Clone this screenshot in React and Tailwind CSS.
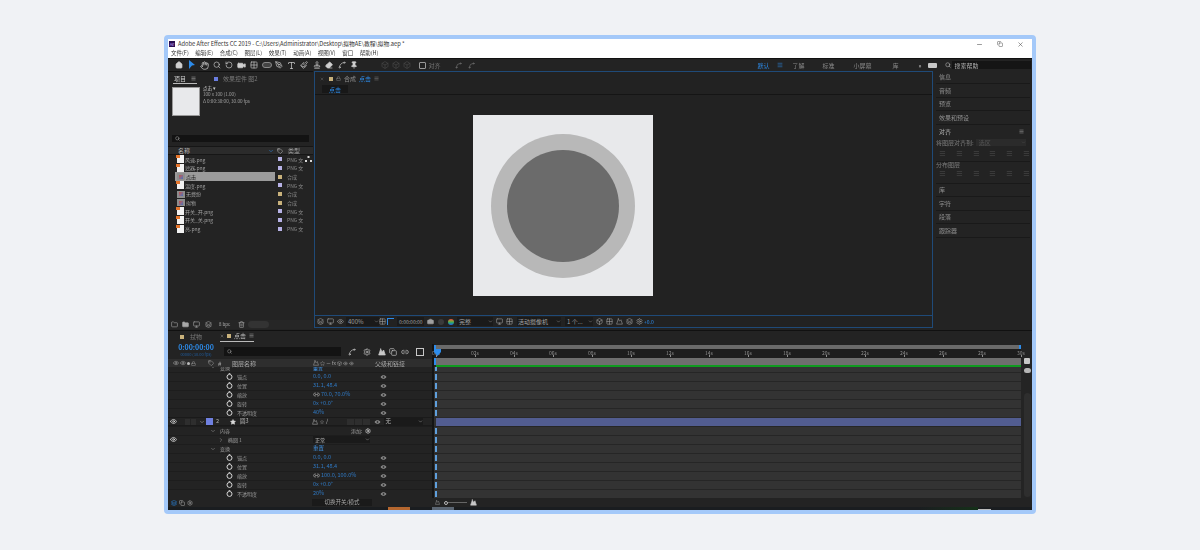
import React from 'react';
import {
  Home, Hand, Search, RotateCcw, Video, PenTool, Type, Paintbrush, Stamp, Eraser, Pin, Eye, Star, Camera,
  ChevronDown, ChevronRight, Settings, Minus, X, Copy, Link2, Lock, Tag, Monitor, Layers, Folder, Trash2, Box, Grid2x2,
  Mountain, Spline, Menu,
} from 'lucide-react';

const Stopwatch = () => (
  <svg width="7" height="7" viewBox="0 0 10 10" className="shrink-0">
    <circle cx="5" cy="5.6" r="3.6" fill="none" stroke="#d8d8d8" strokeWidth="1.4" />
    <path d="M3.8 .7h2.4" stroke="#d8d8d8" strokeWidth="1.2" />
  </svg>
);

const Spiral = () => (
  <svg width="7" height="6" viewBox="0 0 12 10" className="shrink-0">
    <path d="M1 5c2-4 8-4 10 0-2 4-8 4-10 0z" fill="#8a8a8a" />
    <circle cx="6" cy="5" r="1.6" fill="#333" />
  </svg>
);

const Arrow = () => (
  <svg width="8" height="10" viewBox="0 0 8 10"><path d="M1 0l6 5-3 .4-3 3.6z" fill="#2d8ceb" /></svg>
);

const Network = () => (
  <svg width="7" height="6" viewBox="0 0 7 6" className="ml-[2px]">
    <path d="M2.5 0h2v2h-2zM0 4h2v2H0zM5 4h2v2H5z" fill="#d8d8d8" />
  </svg>
);

const FileIcon = ({ comp }) =>
  comp ? (
    <span className="flex h-[7px] w-[8px] shrink-0 items-center justify-center bg-[#8d8d8d]">
      <span className="h-[4px] w-[4px] bg-gradient-to-br from-[#c84a3c] to-[#3d6fc0]" />
    </span>
  ) : (
    <span className="relative h-[8px] w-[7px] shrink-0 bg-[#f2f2f2]">
      <span className="absolute -left-[1px] top-0 h-[3px] w-[4px] bg-[#e5762d]" />
    </span>
  );

const projectRows = [
  { name: '风速.png', type: 'PNG 文', net: true },
  { name: '滤器.png', type: 'PNG 文' },
  { name: '点击', type: '合成', comp: true, selected: true },
  { name: '温度.png', type: 'PNG 文' },
  { name: '无费纷', type: '合成', comp: true },
  { name: '拟物', type: '合成', comp: true },
  { name: '开关_开.png', type: 'PNG 文' },
  { name: '开关_关.png', type: 'PNG 文' },
  { name: '亮.png', type: 'PNG 文' },
];

const rightTop = ['信息', '音频', '预览', '效果和预设'];
const rightBottom = ['库', '字符', '段落', '跟踪器'];
const ruler = ['00s', '02s', '04s', '06s', '08s', '10s', '12s', '14s', '16s', '18s', '20s', '22s', '24s', '26s', '28s', '30s'];

const PropRow = ({ label, value, link }) => (
  <div className="flex h-[9px] items-center border-t border-[#1d1d1d] pb-[1px]">
    <div className="flex w-[145px] items-center gap-[4px] pl-[58px] text-[5px] text-[#9a9a9a]">
      <Stopwatch />
      <span>{label}</span>
    </div>
    <div className="flex w-[67px] items-center gap-[1px] text-[5.5px] text-[#2f79c4]">
      {link && <Link2 size={7} className="text-[#bbbbbb]" />}
      <span>{value}</span>
    </div>
    <Spiral />
  </div>
);

const TextRow = ({ indent, label, right, eye, open = true }) => (
  <div className="flex h-[9px] items-center border-t border-[#1d1d1d] pb-[1px] text-[5px] text-[#9a9a9a]">
    <div className={`flex w-[145px] items-center gap-[3px] ${indent}`}>
      {eye && <Eye size={7} className="mr-[38px] text-white" />}
      {open ? <ChevronDown size={6} /> : <ChevronRight size={6} />}
      <span className="ml-[1px]">{label}</span>
    </div>
    {right}
  </div>
);

const Track = ({ bar }) =>
  bar ? (
    <div className="flex h-[9px] items-center border-t border-[#2a2a2a] bg-[#2f2f2f] pl-[2px]">
      <div className="h-[8px] w-full bg-[#525d91]" />
    </div>
  ) : (
    <div className="flex h-[9px] items-center border-t border-[#262626] bg-[#333333] pl-[1px]">
      <div className="h-[6px] w-[2px] bg-[#5f9fdc]" />
    </div>
  );

export default function App() {
  return (
    <div className="h-[550px] w-[1200px] overflow-hidden bg-[#f0f2f5] pt-[35px] font-['Noto_Sans_CJK_SC','Liberation_Sans',sans-serif]">
      <div className="ml-[164px] h-[479px] w-[872px] overflow-hidden rounded-[4px] border-4 border-[#a4c9f9] bg-[#232323]">
        <div className="blur-[0.35px]">

          {/* title bar + menu */}
          <div className="h-[19px] bg-white text-[#333333]">
            <div className="flex h-[10px] items-center pl-[1px]">
              <span className="mr-[3px] flex h-[6px] w-[6px] items-center justify-center bg-[#2a0f52] text-[4px] leading-none text-[#c9a6ff]">Ae</span>
              <span className="text-[5.75px] leading-none">Adobe After Effects CC 2019 - C:\Users\Administrator\Desktop\拟物AE\教程\拟物.aep *</span>
              <div className="ml-auto mr-[8px] flex items-center gap-[14px] text-[#555555]">
                <Minus size={7} />
                <Copy size={6} />
                <X size={7} />
              </div>
            </div>
            <div className="flex h-[9px] items-center gap-[6.5px] pl-[3px] text-[5.5px] leading-none">
              <span>文件(F)</span>
              <span>编辑(E)</span>
              <span>合成(C)</span>
              <span>图层(L)</span>
              <span>效果(T)</span>
              <span>动画(A)</span>
              <span>视图(V)</span>
              <span>窗口</span>
              <span>帮助(H)</span>
            </div>
          </div>

          {/* tool bar */}
          <div className="flex h-[13px] items-center border-t border-[#111111] text-[#c8c8c8]">
            <div className="ml-[5px] flex items-center">
              <span className="flex w-[12.5px] justify-center"><Home size={8} fill="#d0d0d0" /></span>
              <span className="flex w-[12.5px] justify-center"><Arrow /></span>
              <span className="flex w-[12.5px] justify-center"><Hand size={9} /></span>
              <span className="flex w-[12.5px] justify-center"><Search size={8} /></span>
              <span className="flex w-[12.5px] justify-center"><RotateCcw size={8} /></span>
              <span className="flex w-[12.5px] justify-center"><Video size={9} fill="#d0d0d0" /></span>
              <span className="flex w-[12.5px] justify-center"><Grid2x2 size={8} /></span>
              <span className="flex w-[12.5px] justify-center"><span className="h-[6px] w-[10px] rounded-full border border-[#8a8a8a] bg-[#444444]" /></span>
              <span className="flex w-[12.5px] justify-center"><PenTool size={8} /></span>
              <span className="flex w-[12.5px] justify-center"><Type size={9} /></span>
              <span className="flex w-[12.5px] justify-center"><Paintbrush size={8} /></span>
              <span className="flex w-[12.5px] justify-center"><Stamp size={8} /></span>
              <span className="flex w-[12.5px] justify-center"><Eraser size={8} fill="#d0d0d0" /></span>
              <span className="flex w-[12.5px] justify-center"><Spline size={8} /></span>
              <span className="flex w-[12.5px] justify-center"><Pin size={8} fill="#d0d0d0" /></span>
            </div>
            <div className="ml-[20px] flex items-center gap-[3px] text-[#4a4a4a]">
              <Box size={8} />
              <Box size={8} />
              <Box size={8} />
            </div>
            <div className="ml-[8px] flex items-center gap-[3px] text-[6px] text-[#777777]">
              <span className="h-[7px] w-[7px] rounded-[1px] border border-[#999999]" />
              <span>对齐</span>
            </div>
            <div className="ml-[14px] flex items-center gap-[6px] text-[#777777]">
              <Spline size={7} />
              <Spline size={7} />
            </div>
            <div className="ml-[283px] flex items-center text-[6px] text-[#8a8a8a]">
              <span className="text-[#2d8ceb]">默认</span>
              <Menu size={6} className="ml-[7px] text-[#2d8ceb]" />
              <span className="ml-[10px]">了解</span>
              <span className="ml-[18px]">标准</span>
              <span className="ml-[19px]">小屏幕</span>
              <span className="ml-[21px]">库</span>
              <span className="ml-[20px] text-[#cccccc]">»</span>
              <span className="ml-[7px] h-[5px] w-[9px] rounded-[1px] bg-[#c8c8c8]" />
              <Search size={6} className="ml-[8px] text-[#c8c8c8]" />
              <span className="ml-[1px] flex h-[8px] w-[79px] items-center bg-[#151515] pl-[2px] text-[#b0b0b0]">搜索帮助</span>
            </div>
          </div>

          {/* upper panels */}
          <div className="flex h-[259px]">

            {/* project panel */}
            <div className="flex h-[258px] w-[145px] flex-col border-t border-[#111111] text-[6px] text-[#a0a0a0]">
              <div className="flex h-[13px] items-center pl-[5px]">
                <span className="flex items-center gap-[5px] border-b border-[#bbbbbb] px-[1px] text-[#cfcfcf]">
                  项目
                  <Menu size={5} />
                </span>
                <span className="ml-[17px] h-[4px] w-[4px] bg-[#6a7de0]" />
                <span className="ml-[5px] text-[#777777]">效果控件 图2</span>
              </div>
              <div className="flex h-[50px] pl-[4px] pt-[2px]">
                <div className="h-[29px] w-[28px] border border-[#999999] bg-[#e8e9eb]" />
                <div className="-mt-[2.5px] ml-[3px] flex flex-col text-[4.6px] leading-[6.5px]">
                  <span className="text-[#d0d0d0]">点击 ▾</span>
                  <span>100 x 100 (1.00)</span>
                  <span>Δ 0:00:30:00, 30.00 fps</span>
                </div>
              </div>
              <div className="ml-[4px] flex h-[7px] w-[137px] items-center bg-[#131313] pl-[3px]">
                <Search size={5} className="text-[#bbbbbb]" />
              </div>
              <div className="mt-[4px] flex h-[9px] items-center border-y border-[#161616] bg-[#2b2b2b] pl-[10px]">
                <span className="w-[12px] whitespace-nowrap text-[#b5b5b5]">名称</span>
                <ChevronDown size={6} className="ml-[78px] text-[#2d8ceb]" />
                <Tag size={6} className="ml-[3px] text-[#c8c8c8]" />
                <span className="ml-[5px]">类型</span>
              </div>
              <div className="flex flex-col text-[5px]">
                {projectRows.map((row) => (
                  <div key={row.name} className="flex h-[8.7px] items-center">
                    <div className={`ml-[7px] flex h-[8.7px] w-[100px] items-center gap-[1px] pl-[2px] ${row.selected ? 'bg-[#9b9b9b] text-[#111111]' : ''}`}>
                      <FileIcon comp={row.comp} />
                      <span>{row.name}</span>
                    </div>
                    <span className={`ml-[3px] h-[4px] w-[4px] ${row.comp ? 'bg-[#c9b27c]' : 'bg-[#b7b2e6]'}`} />
                    <span className="ml-[5px] text-[#8a8a8a]">{row.type}</span>
                    {row.net && <Network />}
                  </div>
                ))}
              </div>
              <div className="mt-auto flex h-[9px] items-center bg-[#262626] pl-[3px] text-[#a8a8a8]">
                <Folder size={7} />
                <Folder size={7} fill="#a8a8a8" className="ml-[4px]" />
                <Monitor size={7} className="ml-[4px]" />
                <Layers size={7} className="ml-[5px]" />
                <span className="ml-[7px] w-[12px] whitespace-nowrap text-[4.5px]">8 bpc</span>
                <Trash2 size={7} className="ml-[7px]" />
                <span className="ml-[3px] h-[7px] w-[21px] rounded-full bg-[#333333]" />
              </div>
            </div>

            {/* composition panel */}
            <div className="ml-[1px] flex h-[257px] w-[619px] flex-col border border-[#1f4a78] bg-[#222222] text-[6px] text-[#8f8f8f]">
              <div className="flex h-[13px] items-center gap-[3px] pl-[5px]">
                <X size={4} />
                <span className="ml-[2px] h-[4px] w-[4px] bg-[#c9b27c]" />
                <Lock size={5} />
                <span>合成</span>
                <span className="text-[#2d8ceb]">点击</span>
                <Menu size={5} />
              </div>
              <div className="h-[10px] border-b border-[#151515] pl-[7px]">
                <span className="flex h-[8px] w-[26px] items-center justify-center bg-[#181818] text-[#2d8ceb]">点击</span>
              </div>
              <div className="flex-1 pl-[158px] pt-[20px]">
                <div className="flex h-[181px] w-[180px] items-center justify-center bg-[#e8e9eb]">
                  <div className="flex h-[144px] w-[144px] items-center justify-center rounded-full bg-[#b8b8b8]">
                    <div className="h-[112px] w-[112px] rounded-full bg-[#6b6b6b]" />
                  </div>
                </div>
              </div>
              <div className="flex h-[12px] items-center border-t border-[#1f4a78] pl-[2px] text-[#a0a0a0]">
                <Layers size={7} />
                <Monitor size={7} className="ml-[3px]" />
                <Eye size={7} className="ml-[3px]" />
                <span className="ml-[2px] flex h-[9px] w-[33px] items-center bg-[#1a1a1a] pl-[2px]">400%<ChevronDown size={5} className="ml-auto" /></span>
                <Grid2x2 size={7} />
                <span className="ml-[1px] h-[7px] w-[7px] border-l border-t border-[#2d8ceb]" />
                <span className="ml-[3px] flex h-[9px] w-[27px] items-center bg-[#1a1a1a] pl-[2px] text-[5px]">0:00:00:00</span>
                <Camera size={7} className="ml-[3px]" fill="#a0a0a0" />
                <span className="ml-[4px] h-[6px] w-[6px] rounded-full bg-[#3a3a3a]" />
                <span className="ml-[4px] h-[6px] w-[6px] rounded-full bg-gradient-to-b from-[#e04040] via-[#40b040] to-[#3060e0]" />
                <span className="ml-[3px] flex h-[9px] w-[36px] items-center bg-[#1a1a1a] pl-[2px]">完整<ChevronDown size={5} className="ml-auto" /></span>
                <Monitor size={7} className="ml-[3px]" />
                <Grid2x2 size={7} className="ml-[3px]" />
                <span className="ml-[4px] flex h-[9px] w-[44px] items-center bg-[#1a1a1a] pl-[1px]">活动摄像机<ChevronDown size={5} className="ml-auto" /></span>
                <span className="ml-[4px] flex h-[9px] w-[28px] items-center bg-[#1a1a1a] pl-[2px]">1 个...<ChevronDown size={5} className="ml-auto" /></span>
                <Box size={7} className="ml-[3px]" />
                <Grid2x2 size={7} className="ml-[3px]" />
                <Mountain size={7} className="ml-[3px]" />
                <Layers size={7} className="ml-[3px]" />
                <Settings size={7} className="ml-[3px]" />
                <span className="ml-[1px] text-[5px] text-[#2d8ceb]">+0.0</span>
              </div>
            </div>

            {/* right side panels */}
            <div className="ml-[3px] w-[94px] text-[6px] text-[#8f8f8f]">
              <div className="-mt-[0.5px]" />
              {rightTop.map((name) => (
                <div key={name} className="flex h-[13.5px] items-center border-b border-[#191919] pl-[3px]">{name}</div>
              ))}
              <div className="flex h-[13px] items-center justify-between pl-[3px] pr-[6px] text-[#b5b5b5]">
                <span>对齐</span>
                <Menu size={5} />
              </div>
              <div className="flex h-[9px] items-center">
                <span className="text-[#7d7d7d]">将图层对齐到:</span>
                <span className="ml-[2px] flex h-[7px] w-[50px] items-center bg-[#2b2b2b] pl-[3px] text-[#555555]">选区<ChevronDown size={5} className="ml-auto" /></span>
              </div>
              <div className="flex h-[15px] items-center gap-[10px] border-b border-[#191919] pl-[3px] text-[#4d4d4d]">
                <Menu size={7} /><Menu size={7} /><Menu size={7} /><Menu size={7} /><Menu size={7} /><Menu size={7} />
              </div>
              <div className="flex h-[5px] items-center text-[#7d7d7d]">分布图层</div>
              <div className="flex h-[13px] items-center gap-[10px] pl-[3px] text-[#4d4d4d]">
                <Menu size={7} /><Menu size={7} /><Menu size={7} /><Menu size={7} /><Menu size={7} /><Menu size={7} />
              </div>
              <div className="h-[4px] border-b border-[#191919]" />
              {rightBottom.map((name) => (
                <div key={name} className="flex h-[13.5px] items-center border-b border-[#191919] pl-[3px]">{name}</div>
              ))}
            </div>
          </div>

          {/* timeline tabs */}
          <div className="flex h-[14px] items-center border-t border-[#111111] pb-[2px] pl-[12px] text-[6px] text-[#777777]">
            <span className="h-[4px] w-[4px] bg-[#c9b27c]" />
            <span className="ml-[6px]">拭物</span>
            <div className="ml-[18px] flex items-center gap-[3px] border-b border-[#bbbbbb] pb-[1px] text-[#bdbdbd]">
              <X size={4} />
              <span className="h-[4px] w-[4px] bg-[#c9b27c]" />
              <span>点击</span>
              <Menu size={5} />
            </div>
          </div>

          <div className="flex h-[154px]">
            {/* layer column */}
            <div className="w-[266px] border-r-2 border-[#141414]">
              <div className="flex h-[15px] items-center">
                <div className="-mt-[2px] ml-[5px] w-[46px] text-center text-[#2d8ceb]">
                  <div className="text-[7px] font-bold leading-[7px]">0:00:00:00</div>
                  <div className="whitespace-nowrap text-[4px] leading-[6px] text-[#1f5c9e]">00000 (30.00 fps)</div>
                </div>
                <div className="ml-[5px] flex h-[9px] w-[117px] items-center bg-[#131313] pl-[3px]">
                  <Search size={5} className="text-[#bbbbbb]" />
                </div>
                <div className="ml-[7px] flex items-center text-[#c8c8c8]">
                  <Spline size={8} />
                  <Settings size={8} className="ml-[7px]" />
                  <Mountain size={8} fill="#c8c8c8" className="ml-[7px]" />
                  <Copy size={8} className="ml-[3px]" />
                  <Link2 size={8} className="ml-[4px]" />
                  <span className="ml-[7px] h-[8px] w-[8px] border border-[#c8c8c8]" />
                </div>
              </div>
              <div className="flex h-[8px] items-center bg-[#2e2e2e] text-[6px] text-[#a8a8a8]">
                <div className="ml-[5px] flex w-[35px] items-center gap-[1px]">
                  <Eye size={6} /><Eye size={6} /><span className="h-[3px] w-[3px] rounded-full bg-[#bbb]" /><Lock size={5} />
                </div>
                <Tag size={6} />
                <span className="ml-[4px] w-[14px]">#</span>
                <span className="w-[81px]">图层名称</span>
                <div className="flex w-[62px] items-center gap-[1px]">
                  <Mountain size={6} /><Star size={5} /><Minus size={5} /><span className="text-[5px]">fx</span><Box size={5} /><Eye size={5} /><Eye size={5} />
                </div>
                <span>父级和链接</span>
              </div>
              <div className="h-[131px] overflow-hidden">
                <div className="flex h-[5px] overflow-hidden text-[5px] leading-[1px]">
                  <ChevronDown size={6} className="ml-[42px] -mt-[3px] text-[#9a9a9a]" />
                  <span className="ml-[4px] w-[93px] text-[#9a9a9a]">变换</span>
                  <span className="text-[#3f8fdf]">重置</span>
                </div>
                <PropRow label="锚点" value="0.0, 0.0" />
                <PropRow label="位置" value="31.1, 48.4" />
                <PropRow link label="缩放" value="70.0, 70.0%" />
                <PropRow label="旋转" value="0x +0.0°" />
                <PropRow label="不透明度" value="40%" />

                <div className="flex h-[9px] items-center border-y border-[#1a1a1a] text-[5.5px] text-[#b5b5b5]">
                  <Eye size={7} className="ml-[2px] text-white" />
                  <span className="ml-[8px] h-[6px] w-[5px] bg-[#2e2e2e]" />
                  <span className="ml-[1px] h-[6px] w-[5px] bg-[#2e2e2e]" />
                  <ChevronDown size={6} className="ml-[3px]" />
                  <span className="ml-[1px] h-[7px] w-[7px] bg-[#6f80e0]" />
                  <span className="ml-[3px] w-[14px]">2</span>
                  <Star size={6} fill="#d8d8d8" className="text-[#d8d8d8]" />
                  <span className="ml-[4px] w-[72px]">圆3</span>
                  <Mountain size={6} />
                  <Star size={4} className="ml-[2px]" />
                  <span className="ml-[2px] w-[2px]">/</span>
                  <span className="ml-[19px] h-[6px] w-[7px] bg-[#2e2e2e]" />
                  <span className="ml-[1px] h-[6px] w-[7px] bg-[#2e2e2e]" />
                  <span className="ml-[1px] h-[6px] w-[7px] bg-[#2e2e2e]" />
                  <span className="ml-[4px]"><Spiral /></span>
                  <span className="ml-[2.5px] flex h-[7px] w-[39px] items-center bg-[#1a1a1a] pl-[2px]">无<ChevronDown size={5} className="ml-auto" /></span>
                </div>

                <TextRow indent="pl-[42px]" label="内容" right={
                  <span className="ml-[38px] flex items-center gap-[3px] text-[#9a9a9a]">
                    添加:<Settings size={6} className="text-white" />
                  </span>
                } />
                <TextRow eye indent="pl-[2px]" label="椭圆 1" open={false} right={
                  <span className="flex h-[7px] w-[57px] items-center bg-[#1a1a1a] pl-[2px] text-[#b5b5b5]">正常<ChevronDown size={5} className="ml-auto" /></span>
                } />
                <TextRow indent="pl-[42px]" label="变换" right={<span className="text-[5.5px] text-[#3f8fdf]">重置</span>} />
                <PropRow label="锚点" value="0.0, 0.0" />
                <PropRow label="位置" value="31.1, 48.4" />
                <PropRow link label="缩放" value="100.0, 100.0%" />
                <PropRow label="旋转" value="0x +0.0°" />
                <PropRow label="不透明度" value="20%" />
              </div>
            </div>

            {/* track column */}
            <div className="relative w-[587px]">
              <div className="mt-[1px] flex h-[4px] items-center justify-between bg-[#6a6a6a]">
                <span className="h-[4px] w-[2px] bg-[#2d8ceb]" />
                <span className="h-[4px] w-[2px] bg-[#2d8ceb]" />
              </div>
              <div className="h-[9px] bg-[#1d1d1d]">
                <div className="-ml-[4px] flex w-[597px] justify-between pt-[1px]">
                  {ruler.map((t) => (
                    <div key={t} className="flex w-[12px] flex-col items-center text-[5px] leading-[5px] text-[#8f8f8f]">
                      <span>{t}</span>
                      <span className="h-[2px] w-[1px] bg-[#8f8f8f]" />
                    </div>
                  ))}
                </div>
              </div>
              <div className="flex h-[7px] bg-[#6e6e6e]">
                <span className="h-[7px] w-[2px] bg-[#2d8ceb]" />
              </div>
              <div className="ml-[2px] h-[2px] bg-[#0f9a1f]" />
              <svg width="7" height="8" viewBox="0 0 7 8" className="absolute left-0 top-[5px]"><path d="M0 0h7v3L3.5 7 0 3z" fill="#2d8ceb" /></svg>

              <div className="h-[5px] bg-[#333333] pl-[1px]"><div className="h-[4px] w-[2px] bg-[#5f9fdc]" /></div>
              <Track /><Track /><Track /><Track /><Track />
              <Track bar />
              <Track /><Track /><Track /><Track /><Track /><Track /><Track /><Track />
            </div>

            {/* scrollbar */}
            <div className="flex w-[11px] flex-col items-center bg-[#242424] pl-[1px] pt-[14px]">
              <span className="h-[6px] w-[6px] rounded-[1px] bg-[#c8c8c8]" />
              <span className="mt-[4px] h-[5px] w-[7px] rounded-full bg-[#b5b5b5]" />
              <span className="mt-[20px] h-[104px] w-[7px] rounded-full bg-[#2e2e2e]" />
            </div>
          </div>

          {/* timeline footer */}
          <div className="flex h-[9px] items-center bg-[#232323] text-[5.5px] text-[#a8a8a8]">
            <Layers size={6} className="ml-[3px] text-[#2d8ceb]" />
            <Copy size={6} className="ml-[2px]" />
            <Settings size={6} className="ml-[2px]" />
            <span className="ml-[119px] flex h-[7px] w-[60px] items-center justify-center bg-[#1a1a1a]">切换开关/模式</span>
            <Mountain size={5} className="ml-[63px]" />
            <span className="ml-[4px] h-[4px] w-[4px] rounded-full border border-[#bbbbbb]" />
            <span className="h-[1px] w-[19px] bg-[#666666]" />
            <Mountain size={7} fill="#c8c8c8" className="ml-[3px] text-[#c8c8c8]" />
          </div>
          <div className="flex h-[3px] bg-[#1a1d20]">
            <span className="ml-[220px] h-[3px] w-[22px] bg-[#b5672f]" />
            <span className="ml-[22px] h-[3px] w-[22px] bg-[#5b6673]" />
            <span className="ml-[464px] h-[3px] w-[60px] bg-gradient-to-r from-[#1a1d20] to-[#143018]" />
            <span className="mt-[2px] h-[1px] w-[13px] bg-[#bbbbbb]" />
          </div>
        </div>
      </div>
    </div>
  );
}
